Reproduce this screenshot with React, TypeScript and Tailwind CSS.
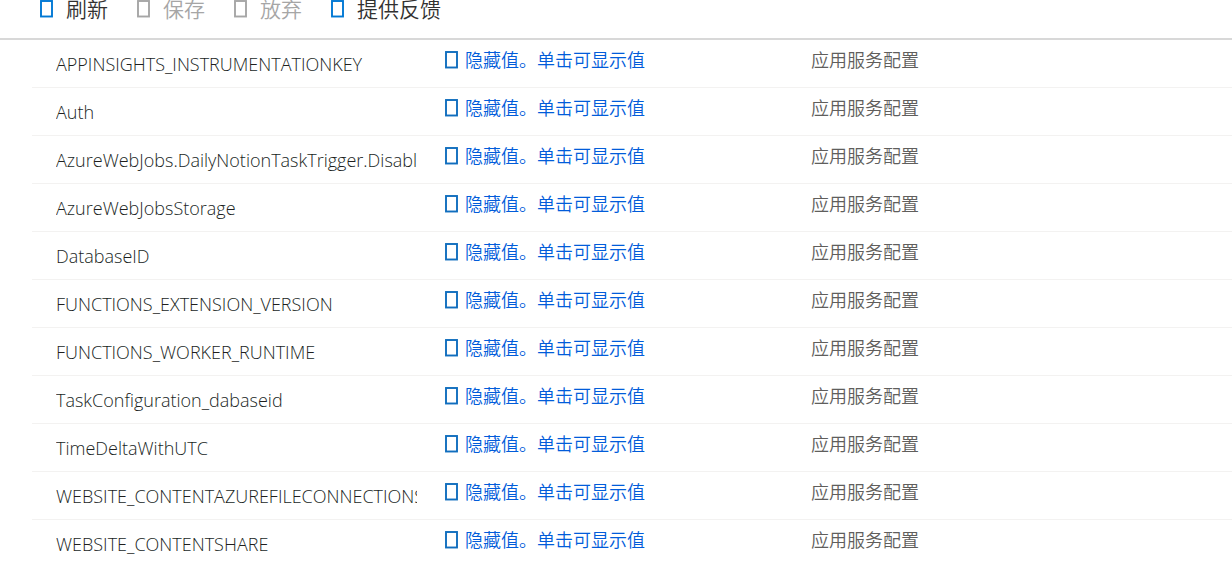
type Command = {
  label: string
  disabled?: boolean
}

const commands: Command[] = [
  { label: '刷新' },
  { label: '保存', disabled: true },
  { label: '放弃', disabled: true },
  { label: '提供反馈' },
]

const settings = [
  'APPINSIGHTS_INSTRUMENTATIONKEY',
  'Auth',
  'AzureWebJobs.DailyNotionTaskTrigger.Disabled',
  'AzureWebJobsStorage',
  'DatabaseID',
  'FUNCTIONS_EXTENSION_VERSION',
  'FUNCTIONS_WORKER_RUNTIME',
  'TaskConfiguration_dabaseid',
  'TimeDeltaWithUTC',
  'WEBSITE_CONTENTAZUREFILECONNECTIONSTRING',
  'WEBSITE_CONTENTSHARE',
]

function BoxIcon({ className }: { className: string }) {
  return (
    <svg viewBox="0 0 13 18" className={className} fill="none" stroke="currentColor" aria-hidden="true">
      <rect x="1" y="1" width="11" height="15.5" strokeWidth="1.9" />
    </svg>
  )
}

function CommandBar() {
  return (
    <header className="h-10 border-b-2 border-[#d8d8d8] overflow-hidden">
      <div className="flex gap-[29px] pl-10 -mt-[7px]">
        {commands.map((command) => (
          <button
            key={command.label}
            disabled={command.disabled}
            className="flex items-center gap-[13px] text-[21px] leading-8 text-[#323130] disabled:text-[#a6a6a6]"
          >
            <BoxIcon
              className={`w-[13px] h-[18px] ${command.disabled ? 'text-[#a6a6a6]' : 'text-[#0078d4]'}`}
            />
            {command.label}
          </button>
        ))}
      </div>
    </header>
  )
}

export default function App() {
  return (
    <div className="min-h-screen bg-white overflow-hidden font-['Open_Sans','Noto_Sans_CJK_SC',sans-serif] font-[350]">
      <CommandBar />
      <main className="pl-8">
        <table className="w-full table-fixed border-separate border-spacing-0" aria-label="应用服务配置">
          <colgroup>
            <col className="w-[413px]" />
            <col className="w-[366px]" />
            <col />
          </colgroup>
          <tbody>
            {settings.map((name) => (
              <tr key={name} className="h-12 align-top">
                <td className="border-b border-[#f3f2f1] pl-6 pt-3 pr-7">
                  <div className="overflow-hidden whitespace-nowrap font-light text-lg leading-6 text-[#201f1e]">
                    {name}
                  </div>
                </td>
                <td className="border-b border-[#f3f2f1] pt-2">
                  <button className="flex items-center gap-[7px] text-lg leading-6 text-[#015cda]">
                    <BoxIcon className="w-[13px] h-[18px] text-[#106ebe]" />
                    隐藏值。单击可显示值
                  </button>
                </td>
                <td className="border-b border-[#f3f2f1] pt-2 text-lg leading-6 text-[#605e5c]">
                  应用服务配置
                </td>
              </tr>
            ))}
          </tbody>
        </table>
      </main>
    </div>
  )
}
